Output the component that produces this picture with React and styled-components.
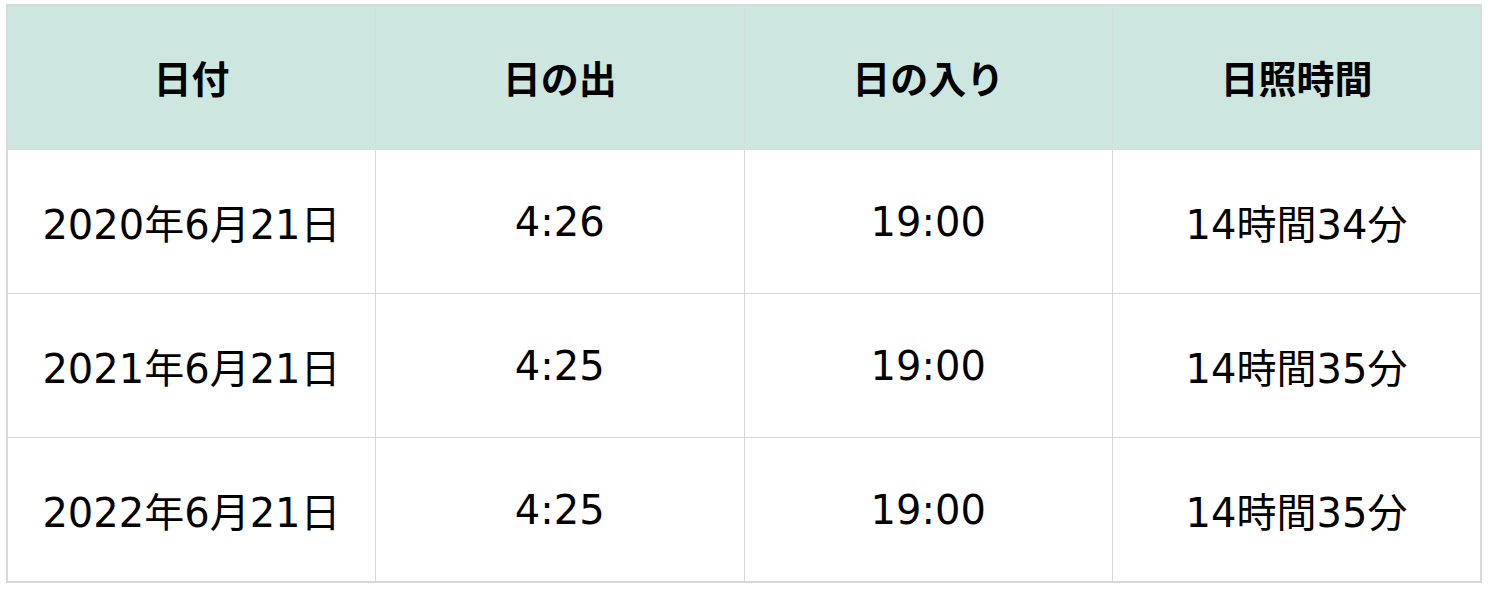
import React from 'react';
import styled, { createGlobalStyle } from 'styled-components';

const GlobalStyle = createGlobalStyle`
    html, body {
        margin: 0;
        padding: 0;
        background: #ffffff;
    }
    body {
        font-family: "DejaVu Sans", "Noto Sans CJK JP", sans-serif;
        color: #000000;
    }
`

const Page = styled.div`
    padding: 4px 9px 10px 6px;
`

const Table = styled.table`
    width: 1476px;
    border-collapse: collapse;
    table-layout: fixed;
    border: 2px solid #d9d9d9;
`

const HeadCell = styled.th`
    height: 141px;
    padding: 0 0 2px;
    background: #cde6df;
    border: 1px solid #d4dedb;
    font-family: "Noto Sans CJK JP", sans-serif;
    font-size: 38px;
    font-weight: 700;
    text-align: center;
    vertical-align: middle;
`

const Cell = styled.td`
    height: 143px;
    padding: 0;
    border: 1px solid #d9d9d9;
    font-size: 40px;
    font-weight: 400;
    text-align: center;
    vertical-align: middle;
`

const headers = ['日付', '日の出', '日の入り', '日照時間'];

const rows = [
    ['2020年6月21日', '4:26', '19:00', '14時間34分'],
    ['2021年6月21日', '4:25', '19:00', '14時間35分'],
    ['2022年6月21日', '4:25', '19:00', '14時間35分'],
];

export default function App() {
    return (
        <>
            <GlobalStyle />
            <Page>
                <Table>
                    <thead>
                        <tr>
                            {headers.map((h) => (
                                <HeadCell key={h}>{h}</HeadCell>
                            ))}
                        </tr>
                    </thead>
                    <tbody>
                        {rows.map((r, i) => (
                            <tr key={i}>
                                {r.map((c, j) => (
                                    <Cell key={j}>{c}</Cell>
                                ))}
                            </tr>
                        ))}
                    </tbody>
                </Table>
            </Page>
        </>
    );
}
